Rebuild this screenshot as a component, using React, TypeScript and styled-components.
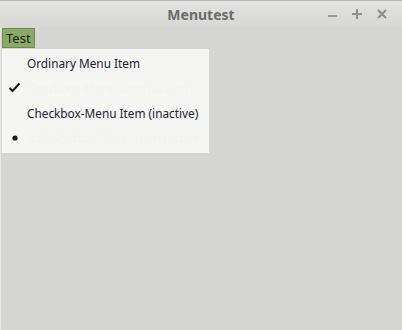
import React from 'react';
import styled, { createGlobalStyle } from 'styled-components';

const Global = createGlobalStyle`
  html, body {
    margin: 0;
    padding: 0;
    background: #d6d7d3;
  }
`;

const Window = styled.div`
  width: 402px;
  height: 330px;
  box-sizing: border-box;
  display: flex;
  flex-direction: column;
  background: #d6d7d3;
  box-shadow: inset 1px 0 0 #e6e7e3;
  font-family: 'Noto Sans', 'Open Sans', sans-serif;
`;

const TitleBar = styled.div`
  height: 27px;
  flex: none;
  position: relative;
  display: flex;
  align-items: center;
  justify-content: center;
  background: linear-gradient(#e2e3e0, #d7d8d4);
  border-top: 1px solid #b9bab6;
  box-sizing: border-box;
`;

const Title = styled.div`
  font-size: 14px;
  font-weight: bold;
  color: #6a6b6c;
`;

const Controls = styled.div`
  position: absolute;
  right: 14px;
  top: 5px;
  display: flex;
  gap: 13px;
`;

const Ctl = styled.div`
  width: 12px;
  height: 15px;
  display: flex;
  align-items: center;
  justify-content: center;
`;

const MenuBar = styled.div`
  display: flex;
  padding: 1px 2px 0;
`;

const MenuButton = styled.div`
  height: 20px;
  box-sizing: border-box;
  padding: 0 3px 0 3px;
  display: flex;
  align-items: center;
  background: #8aab68;
  border: 1px solid #6e8a52;
  color: #1d2616;
  font-size: 13px;
`;

const Popup = styled.div`
  margin: 1px 0 0 2px;
  width: 207px;
  padding: 1px 0 3px;
  background: #f5f6f2;
  box-sizing: border-box;
`;

const Item = styled.div`
  height: 25px;
  display: flex;
  align-items: center;
  font-size: 11.8px;
`;

const Mark = styled.div`
  width: 25px;
  flex: none;
  display: flex;
  justify-content: center;
`;

const Label = styled.span<{ dim?: boolean }>`
  color: ${({ dim }) => (dim ? '#f1f3ee' : '#202038')};
  white-space: nowrap;
`;

const Check = () => (
  <svg width="13" height="11" viewBox="0 0 13 11">
    <path d="M1.5 6 L4.5 9 L11.5 1.5" fill="none" stroke="#1c1c1c" strokeWidth="2" />
  </svg>
);

const Dot = () => (
  <svg width="6" height="6" viewBox="0 0 6 6">
    <circle cx="3" cy="3" r="2.6" fill="#1c1c1c" />
  </svg>
);

const Minimize = () => (
  <svg width="12" height="12" viewBox="0 0 12 12">
    <rect x="2" y="7" width="9" height="2" fill="#9a9b98" />
  </svg>
);

const Maximize = () => (
  <svg width="12" height="12" viewBox="0 0 12 12">
    <rect x="1" y="5" width="10" height="2" fill="#8d8e8c" />
    <rect x="5" y="1" width="2" height="10" fill="#8d8e8c" />
  </svg>
);

const Close = () => (
  <svg width="12" height="12" viewBox="0 0 12 12">
    <path d="M2 2 L10 10 M10 2 L2 10" stroke="#8d8e8c" strokeWidth="2.2" />
  </svg>
);

export default function App() {
  return (
    <>
      <Global />
      <Window>
        <TitleBar>
          <Title>Menutest</Title>
          <Controls>
            <Ctl>
              <Minimize />
            </Ctl>
            <Ctl>
              <Maximize />
            </Ctl>
            <Ctl>
              <Close />
            </Ctl>
          </Controls>
        </TitleBar>
        <MenuBar>
          <MenuButton>Test</MenuButton>
        </MenuBar>
        <Popup>
          <Item>
            <Mark />
            <Label>Ordinary Menu Item</Label>
          </Item>
          <Item>
            <Mark>
              <Check />
            </Mark>
            <Label dim>Checkbox-Menu Item (active)</Label>
          </Item>
          <Item>
            <Mark />
            <Label>Checkbox-Menu Item (inactive)</Label>
          </Item>
          <Item>
            <Mark>
              <Dot />
            </Mark>
            <Label dim>Radiobutton-Menu Item (active)</Label>
          </Item>
        </Popup>
      </Window>
    </>
  );
}
